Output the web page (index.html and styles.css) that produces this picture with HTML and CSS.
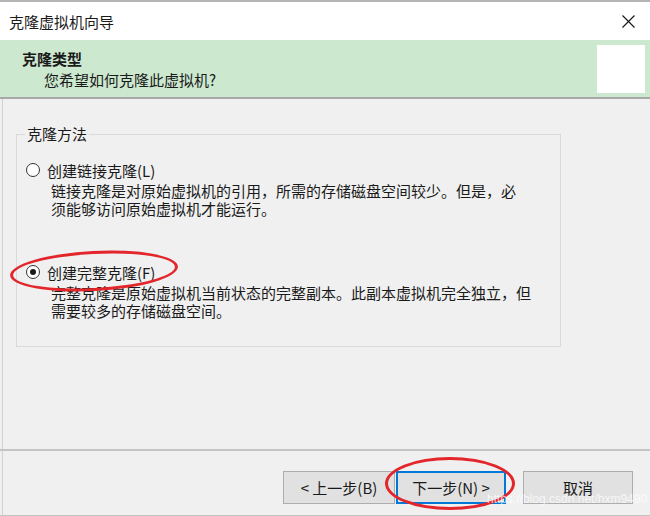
FILE: index.html
```html
<!DOCTYPE html>
<html lang="zh-CN">
<head>
    <meta charset="UTF-8">
    <meta name="viewport" content="width=device-width, initial-scale=1.0">
    <title>克隆虚拟机向导</title>
    <link rel="stylesheet" href="styles.css">
</head>
<body>
    <div class="window">
        <div class="titlebar">
            <span class="title">克隆虚拟机向导</span>
            <span class="close">
                <svg width="13" height="13" viewBox="0 0 13 13">
                    <path d="M0.5 0.5 L12.5 12.5 M12.5 0.5 L0.5 12.5" stroke="#1a1a1a" stroke-width="1.2" fill="none"/>
                </svg>
            </span>
        </div>

        <div class="header">
            <div class="header-text">
                <div class="header-title">克隆类型</div>
                <div class="header-sub">您希望如何克隆此虚拟机?</div>
            </div>
            <div class="header-logo"></div>
        </div>

        <div class="content">
            <fieldset class="group">
                <legend>克隆方法</legend>
                <div class="option">
                    <div class="option-row">
                        <span class="radio"></span>
                        <span class="option-label">创建链接克隆(L)</span>
                    </div>
                    <div class="option-desc">链接克隆是对原始虚拟机的引用，所需的存储磁盘空间较少。但是，必<br>须能够访问原始虚拟机才能运行。</div>
                </div>
                <div class="option option-second">
                    <div class="option-row">
                        <span class="radio checked"></span>
                        <span class="option-label">创建完整克隆(F)</span>
                    </div>
                    <div class="option-desc">完整克隆是原始虚拟机当前状态的完整副本。此副本虚拟机完全独立，但<br>需要较多的存储磁盘空间。</div>
                </div>
            </fieldset>
        </div>

        <div class="footer">
            <button class="btn">&lt; 上一步(B)</button>
            <button class="btn btn-focus">下一步(N) &gt;</button>
            <button class="btn btn-cancel">取消</button>
        </div>
    </div>

    <div class="mark mark-option"></div>
    <div class="mark mark-next"></div>
    <div class="watermark">https://blog.csdn.net/hxm9490</div>
</body>
</html>
```

FILE: styles.css
```css
body {
    margin: 0;
    padding: 0;
    width: 650px;
    height: 516px;
    overflow: hidden;
    position: relative;
    background-color: #f0f0f0;
    font-family: "Noto Sans CJK SC", "Microsoft YaHei", sans-serif;
    color: #1a1a1a;
}

.window {
    display: flex;
    flex-direction: column;
    height: 516px;
    border-top: 2px solid #b4b4b4;
    box-sizing: border-box;
}

.titlebar {
    height: 38px;
    background: #ffffff;
    display: flex;
    justify-content: space-between;
    align-items: center;
    padding: 0 15px 0 9px;
}

.title {
    font-size: 15px;
}

.close {
    display: flex;
}

.header {
    height: 57px;
    background: #cce8cf;
    border-bottom: 2px solid #a8a8a8;
    display: flex;
    justify-content: space-between;
    align-items: center;
    padding: 0 5px 0 22px;
}

.header-text {
    font-size: 15px;
    line-height: 21px;
    padding-top: 1px;
}

.header-title {
    font-weight: bold;
}

.header-sub {
    padding-left: 22px;
}

.header-logo {
    width: 48px;
    height: 48px;
    background: #ffffff;
}

.content {
    flex: 1;
    padding: 25px 0 0 16px;
    box-shadow: inset 2px 0 0 #f0f0f0, inset 3px 0 0 #d2d2d2;
}

.group {
    width: 545px;
    height: 223px;
    margin: 0;
    padding: 0 0 0 9px;
    border: 1px solid #dadada;
    box-sizing: border-box;
}

.group legend {
    font-size: 15px;
    line-height: 20px;
    padding: 0 2px;
    margin-left: -1px;
}

.option {
    padding-top: 16px;
}

.option-second {
    padding-top: 44px;
}

.option-row {
    display: flex;
    align-items: center;
    height: 20px;
    font-size: 15px;
}

.radio {
    width: 12px;
    height: 12px;
    border: 1px solid #333333;
    border-radius: 50%;
    background: #ffffff;
    position: relative;
    margin-right: 7px;
}

.radio.checked::after {
    content: "";
    position: absolute;
    left: 3px;
    top: 3px;
    width: 6px;
    height: 6px;
    border-radius: 50%;
    background: #1a1a1a;
}

.option-desc {
    font-size: 15px;
    line-height: 18px;
    margin-top: 2px;
    padding-left: 25px;
    white-space: nowrap;
}

.footer {
    height: 67px;
    border-top: 2px solid #c4c4c4;
    border-bottom: 1px solid #c4c4c4;
    display: flex;
    justify-content: flex-end;
    align-items: flex-start;
    padding: 20px 17px 0 0;
    box-sizing: border-box;
    box-shadow: inset 2px 0 0 #f0f0f0, inset 3px 0 0 #d2d2d2;
}

.btn {
    height: 33px;
    width: 112px;
    background: #e1e1e1;
    border: 1px solid #adadad;
    font-family: inherit;
    font-size: 15px;
    color: #1a1a1a;
    padding: 0;
}

.btn-focus {
    width: 110px;
    margin-left: 1px;
    border: 2px solid #0078d7;
}

.btn-cancel {
    width: 110px;
    margin-left: 17px;
}

/* red hand-drawn highlight marks over the screenshot */
.mark {
    position: absolute;
    border: 3px solid #e3262b;
    border-radius: 50%;
    box-sizing: border-box;
}

.mark-option {
    left: 10px;
    top: 251px;
    width: 168px;
    height: 40px;
    transform: rotate(-3deg);
}

.mark-next {
    left: 385px;
    top: 457px;
    width: 130px;
    height: 53px;
}

.watermark {
    position: absolute;
    left: 487px;
    top: 492px;
    font-family: "Liberation Sans", sans-serif;
    font-size: 12px;
    color: rgba(255, 255, 255, 0.75);
}
```
